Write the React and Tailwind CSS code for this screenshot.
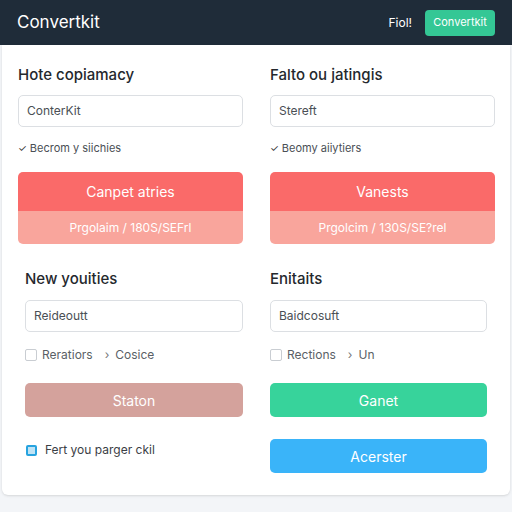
import React from "react";

const font = { fontFamily: "Inter, 'Noto Sans', sans-serif" };

const Input = ({ value, className = "" }) => (
  <div
    className={`h-[32px] rounded-[5px] border border-[#dcdfe3] bg-white px-[8px] flex items-center text-[12px] text-[#4a4f55] ${className}`}
  >
    {value}
  </div>
);

const Check = ({ label }) => (
  <div className="mt-[13px] h-[16px] flex items-center gap-[3px] text-[11px] text-[#4a4f55]">
    <span className="text-[10px] text-[#333]">✓</span>
    <span>{label}</span>
  </div>
);

const SplitButton = ({ top, bottom }) => (
  <div className="mt-[16px] rounded-[5px] overflow-hidden text-white">
    <div className="h-[39px] bg-[#fa6a69] flex items-center justify-center text-[14px]">
      {top}
    </div>
    <div className="h-[33px] bg-[#f9a59c] flex items-center justify-center text-[12px]">
      {bottom}
    </div>
  </div>
);

const Heading = ({ children }) => (
  <h3 className="h-[20px] flex items-center text-[15px] font-medium text-[#24282d]">
    {children}
  </h3>
);

const CheckRow = ({ a, b }) => (
  <div className="mt-[15px] h-[16px] flex items-center text-[12px] text-[#5a5f66]">
    <span className="w-[12px] h-[12px] rounded-[2px] border border-[#c9cdd2] bg-white mr-[5px]" />
    <span>{a}</span>
    <span className="ml-[12px] mr-[6px] text-[#777]">›</span>
    <span>{b}</span>
  </div>
);

export default function App() {
  return (
    <div className="w-[512px] h-[512px] bg-[#f3f5f8] flex flex-col" style={font}>
      <header className="h-[45px] bg-[#1f2c39] flex items-center justify-between pl-[17px] pr-[17px] shrink-0">
        <span className="text-[17px] text-white">Convertkit</span>
        <div className="flex items-center gap-[13px]">
          <span className="text-[12px] text-white">Fiol!</span>
          <button className="h-[26px] w-[70px] rounded-[4px] bg-[#34c795] text-[11px] text-white">
            Convertkit
          </button>
        </div>
      </header>

      <main className="mx-[2px] h-[450px] bg-white rounded-b-[6px] shadow-sm">
        <section className="grid grid-cols-[225px_225px] gap-x-[27px] pl-[16px] pt-[20px]">
          <div>
            <Heading>Hote copiamacy</Heading>
            <Input value="ConterKit" className="mt-[10px]" />
            <Check label="Becrom y siichies" />
            <SplitButton top="Canpet atries" bottom="Prgolaim / 180S/SEFrl" />
          </div>
          <div>
            <Heading>Falto ou jatingis</Heading>
            <Input value="Stereft" className="mt-[10px]" />
            <Check label="Beomy aiiytiers" />
            <SplitButton top="Vanests" bottom="Prgolcim / 130S/SE?rel" />
          </div>
        </section>

        <section className="grid grid-cols-[218px_217px] gap-x-[27px] pl-[23px] pt-[25px]">
          <div>
            <Heading>New youities</Heading>
            <Input value="Reideoutt" className="mt-[11px]" />
            <CheckRow a="Reratiors" b="Cosice" />
            <button className="mt-[20px] w-full h-[34px] rounded-[5px] bg-[#d4a29c] text-[14px] text-white">
              Staton
            </button>
            <div className="mt-[25px] h-[16px] flex items-center text-[12px] text-[#3b4046]">
              <span className="w-[11px] h-[11px] rounded-[2px] border-2 border-[#27a3df] bg-[#bfe3f5] ml-[1px] mr-[8px]" />
              <span>Fert you parger ckil</span>
            </div>
          </div>
          <div>
            <Heading>Enitaits</Heading>
            <Input value="Baidcosuft" className="mt-[11px]" />
            <CheckRow a="Rections" b="Un" />
            <button className="mt-[20px] w-full h-[34px] rounded-[5px] bg-[#37d39b] text-[14px] text-white">
              Ganet
            </button>
            <button className="mt-[22px] w-full h-[34px] rounded-[5px] bg-[#3ab4f9] text-[14px] text-white">
              Acerster
            </button>
          </div>
        </section>
      </main>
    </div>
  );
}
